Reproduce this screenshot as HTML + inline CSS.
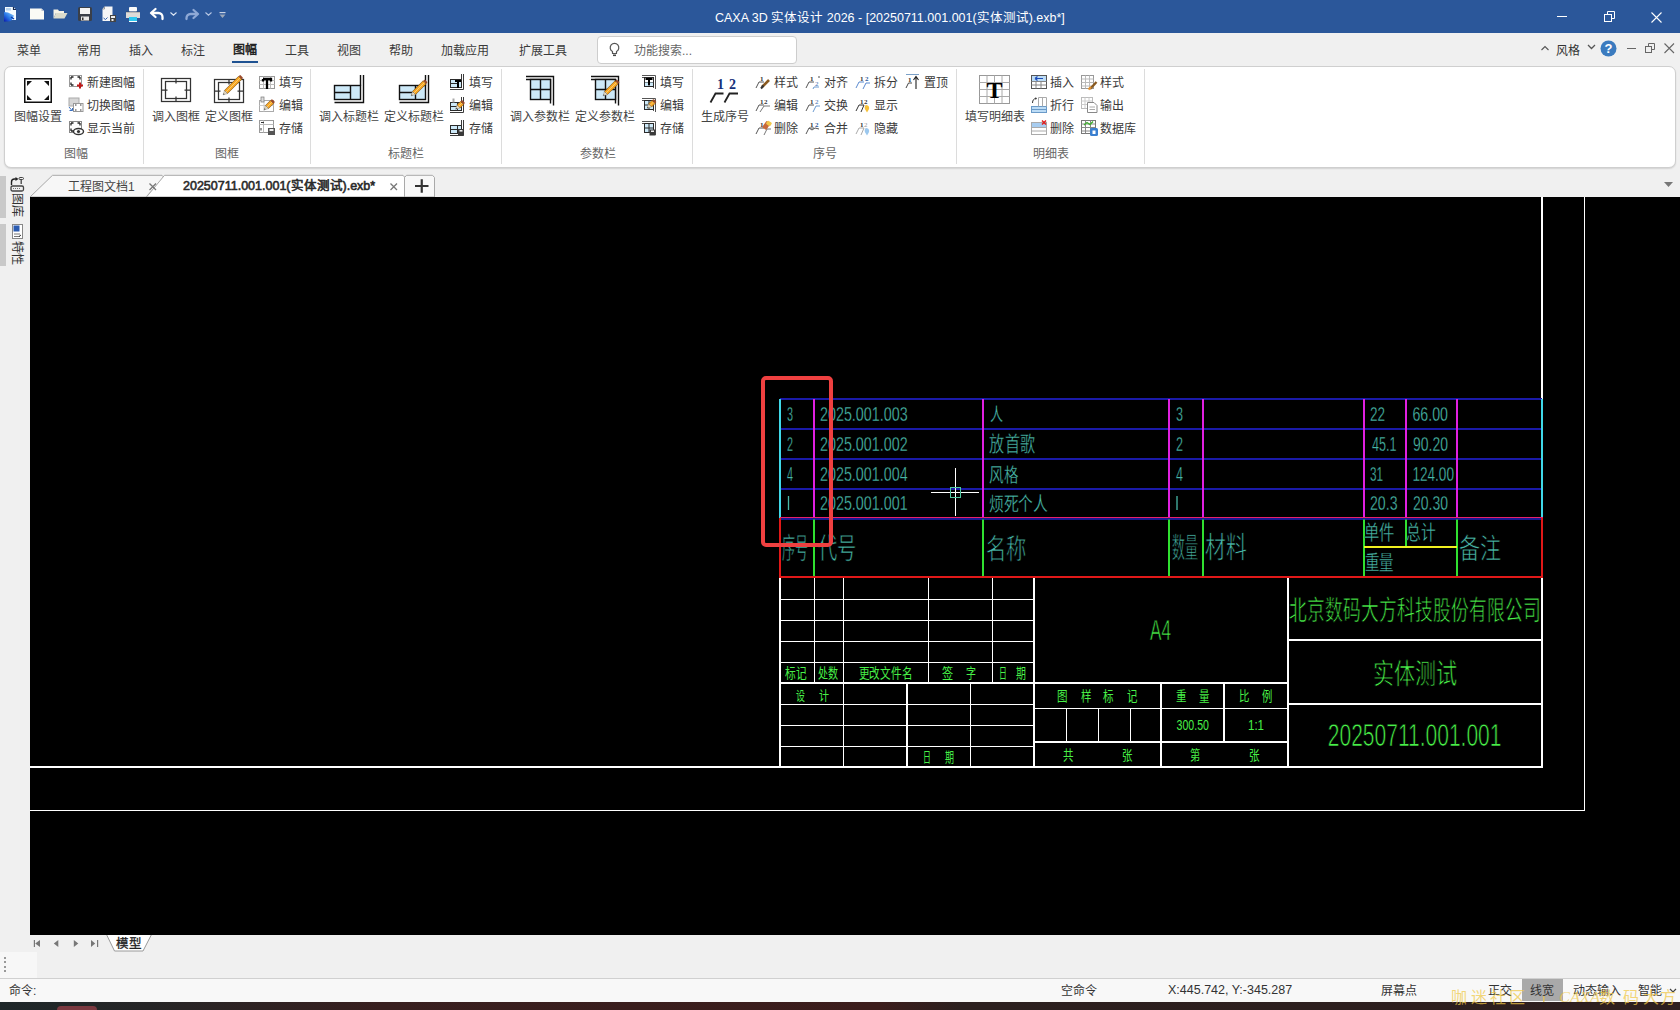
<!DOCTYPE html>
<html lang="zh-CN">
<head>
<meta charset="utf-8">
<style>
*{margin:0;padding:0;box-sizing:border-box}
html,body{width:1680px;height:1010px;overflow:hidden;background:#f0f0f0;font-family:"Liberation Sans",sans-serif;color:#333}
.a{position:absolute;white-space:nowrap}
svg.a{overflow:visible}
</style>
</head>
<body>
<div class="a" style="left:0px;top:0px;width:1680px;height:33px;background:#2b579a"></div>
<div class="a" style="left:715px;top:12px;font-size:12.5px;line-height:12.5px;color:#fff;">CAXA 3D 实体设计 2026 - [20250711.001.001(实体测试).exb*]</div>
<div class="a" style="left:1557px;top:16px;width:10px;height:1px;background:#fff"></div>
<svg class="a" style="left:1604px;top:11px" width="12" height="12" viewBox="0 0 12 12"><rect x="0.5" y="3.5" width="7" height="7" fill="none" stroke="#fff"/><path d="M3.5 3.5V0.5H10.5V7.5H7.5" fill="none" stroke="#fff"/></svg>
<svg class="a" style="left:1651px;top:12px" width="11" height="11" viewBox="0 0 11 11"><path d="M0.5 0.5L10.5 10.5M10.5 0.5L0.5 10.5" stroke="#fff" stroke-width="1.1"/></svg>
<div class="a" style="left:0px;top:33px;width:1680px;height:34px;background:#f0f0f0"></div>
<div class="a" style="left:17px;top:45px;font-size:12px;line-height:12px;color:#3a3a3a;">菜单</div>
<div class="a" style="left:77px;top:45px;font-size:12px;line-height:12px;color:#3a3a3a;">常用</div>
<div class="a" style="left:129px;top:45px;font-size:12px;line-height:12px;color:#3a3a3a;">插入</div>
<div class="a" style="left:181px;top:45px;font-size:12px;line-height:12px;color:#3a3a3a;">标注</div>
<div class="a" style="left:285px;top:45px;font-size:12px;line-height:12px;color:#3a3a3a;">工具</div>
<div class="a" style="left:337px;top:45px;font-size:12px;line-height:12px;color:#3a3a3a;">视图</div>
<div class="a" style="left:389px;top:45px;font-size:12px;line-height:12px;color:#3a3a3a;">帮助</div>
<div class="a" style="left:441px;top:45px;font-size:12px;line-height:12px;color:#3a3a3a;">加载应用</div>
<div class="a" style="left:519px;top:45px;font-size:12px;line-height:12px;color:#3a3a3a;">扩展工具</div>
<div class="a" style="left:233px;top:44px;font-size:12px;line-height:12px;color:#1a1a1a;-webkit-text-stroke:0.45px #1a1a1a">图幅</div>
<div class="a" style="left:232px;top:61px;width:26px;height:2px;background:#1f5292"></div>
<div class="a" style="left:597px;top:36px;width:200px;height:28px;background:#fff;border:1px solid #cdcdcd;border-radius:4px"></div>
<svg class="a" style="left:609px;top:43px" width="12" height="14" viewBox="0 0 12 14"><path d="M3.5 10.5V8.5A4.3 4.3 0 1 1 7.5 8.5V10.5Z" fill="none" stroke="#555" stroke-width="1.2" stroke-linejoin="round"/><path d="M4 12.3h3" stroke="#444" stroke-width="1.6"/></svg>
<div class="a" style="left:634px;top:45px;font-size:12px;line-height:12px;color:#666;">功能搜索...</div>
<svg class="a" style="left:1541px;top:45px" width="8" height="6" viewBox="0 0 8 6"><path d="M0.5 5L4 1.5L7.5 5" fill="none" stroke="#555" stroke-width="1.1"/></svg>
<div class="a" style="left:1556px;top:45px;font-size:12px;line-height:12px;color:#333;">风格</div>
<svg class="a" style="left:1587px;top:44px" width="9" height="6" viewBox="0 0 9 6"><path d="M1 1L4.5 4.5L8 1" fill="none" stroke="#555" stroke-width="1.3"/></svg>
<svg class="a" style="left:1600px;top:40px" width="17" height="17" viewBox="0 0 17 17"><circle cx="8.5" cy="8.5" r="8" fill="#3b7bbf"/><text x="8.5" y="13.2" text-anchor="middle" font-size="13" font-weight="bold" fill="#fff" font-family="Liberation Sans">?</text></svg>
<div class="a" style="left:1627px;top:48px;width:9px;height:1px;background:#666"></div>
<svg class="a" style="left:1645px;top:43px" width="11" height="11" viewBox="0 0 11 11"><rect x="0.5" y="3.5" width="6" height="6" fill="none" stroke="#666"/><path d="M3.5 3.5V0.5H9.5V6.5H6.5" fill="none" stroke="#666"/></svg>
<svg class="a" style="left:1664px;top:43px" width="11" height="11" viewBox="0 0 11 11"><path d="M0.5 0.5L10 10M10 0.5L0.5 10" stroke="#666" stroke-width="1.1"/></svg>
<div class="a" style="left:4px;top:66px;width:1672px;height:102px;background:#fff;border:1px solid #cfcfcf;border-radius:7px;box-shadow:0 1px 1.5px rgba(0,0,0,.12)"></div>
<div class="a" style="left:143px;top:69px;width:1px;height:95px;background:#dcdcdc"></div>
<div class="a" style="left:310px;top:69px;width:1px;height:95px;background:#dcdcdc"></div>
<div class="a" style="left:501px;top:69px;width:1px;height:95px;background:#dcdcdc"></div>
<div class="a" style="left:692px;top:69px;width:1px;height:95px;background:#dcdcdc"></div>
<div class="a" style="left:956px;top:69px;width:1px;height:95px;background:#dcdcdc"></div>
<div class="a" style="left:1144px;top:69px;width:1px;height:95px;background:#dcdcdc"></div>
<div class="a" style="left:64px;top:148px;font-size:12px;line-height:12px;color:#666;">图幅</div>
<div class="a" style="left:215px;top:148px;font-size:12px;line-height:12px;color:#666;">图框</div>
<div class="a" style="left:388px;top:148px;font-size:12px;line-height:12px;color:#666;">标题栏</div>
<div class="a" style="left:580px;top:148px;font-size:12px;line-height:12px;color:#666;">参数栏</div>
<div class="a" style="left:813px;top:148px;font-size:12px;line-height:12px;color:#666;">序号</div>
<div class="a" style="left:1033px;top:148px;font-size:12px;line-height:12px;color:#666;">明细表</div>
<div class="a" style="left:14px;top:111px;font-size:12px;line-height:12px;color:#444;">图幅设置</div>
<div class="a" style="left:152px;top:111px;font-size:12px;line-height:12px;color:#444;">调入图框</div>
<div class="a" style="left:205px;top:111px;font-size:12px;line-height:12px;color:#444;">定义图框</div>
<div class="a" style="left:319px;top:111px;font-size:12px;line-height:12px;color:#444;">调入标题栏</div>
<div class="a" style="left:384px;top:111px;font-size:12px;line-height:12px;color:#444;">定义标题栏</div>
<div class="a" style="left:510px;top:111px;font-size:12px;line-height:12px;color:#444;">调入参数栏</div>
<div class="a" style="left:575px;top:111px;font-size:12px;line-height:12px;color:#444;">定义参数栏</div>
<div class="a" style="left:701px;top:111px;font-size:12px;line-height:12px;color:#444;">生成序号</div>
<div class="a" style="left:965px;top:111px;font-size:12px;line-height:12px;color:#444;">填写明细表</div>
<div class="a" style="left:87px;top:77px;font-size:12px;line-height:12px;color:#3a3a3a;">新建图幅</div>
<div class="a" style="left:87px;top:100px;font-size:12px;line-height:12px;color:#3a3a3a;">切换图幅</div>
<div class="a" style="left:87px;top:123px;font-size:12px;line-height:12px;color:#3a3a3a;">显示当前</div>
<div class="a" style="left:279px;top:77px;font-size:12px;line-height:12px;color:#3a3a3a;">填写</div>
<div class="a" style="left:279px;top:100px;font-size:12px;line-height:12px;color:#3a3a3a;">编辑</div>
<div class="a" style="left:279px;top:123px;font-size:12px;line-height:12px;color:#3a3a3a;">存储</div>
<div class="a" style="left:469px;top:77px;font-size:12px;line-height:12px;color:#3a3a3a;">填写</div>
<div class="a" style="left:469px;top:100px;font-size:12px;line-height:12px;color:#3a3a3a;">编辑</div>
<div class="a" style="left:469px;top:123px;font-size:12px;line-height:12px;color:#3a3a3a;">存储</div>
<div class="a" style="left:660px;top:77px;font-size:12px;line-height:12px;color:#3a3a3a;">填写</div>
<div class="a" style="left:660px;top:100px;font-size:12px;line-height:12px;color:#3a3a3a;">编辑</div>
<div class="a" style="left:660px;top:123px;font-size:12px;line-height:12px;color:#3a3a3a;">存储</div>
<div class="a" style="left:774px;top:77px;font-size:12px;line-height:12px;color:#3a3a3a;">样式</div>
<div class="a" style="left:774px;top:100px;font-size:12px;line-height:12px;color:#3a3a3a;">编辑</div>
<div class="a" style="left:774px;top:123px;font-size:12px;line-height:12px;color:#3a3a3a;">删除</div>
<div class="a" style="left:824px;top:77px;font-size:12px;line-height:12px;color:#3a3a3a;">对齐</div>
<div class="a" style="left:824px;top:100px;font-size:12px;line-height:12px;color:#3a3a3a;">交换</div>
<div class="a" style="left:824px;top:123px;font-size:12px;line-height:12px;color:#3a3a3a;">合并</div>
<div class="a" style="left:874px;top:77px;font-size:12px;line-height:12px;color:#3a3a3a;">拆分</div>
<div class="a" style="left:874px;top:100px;font-size:12px;line-height:12px;color:#3a3a3a;">显示</div>
<div class="a" style="left:874px;top:123px;font-size:12px;line-height:12px;color:#3a3a3a;">隐藏</div>
<div class="a" style="left:924px;top:77px;font-size:12px;line-height:12px;color:#3a3a3a;">置顶</div>
<div class="a" style="left:1050px;top:77px;font-size:12px;line-height:12px;color:#3a3a3a;">插入</div>
<div class="a" style="left:1050px;top:100px;font-size:12px;line-height:12px;color:#3a3a3a;">折行</div>
<div class="a" style="left:1050px;top:123px;font-size:12px;line-height:12px;color:#3a3a3a;">删除</div>
<div class="a" style="left:1100px;top:77px;font-size:12px;line-height:12px;color:#3a3a3a;">样式</div>
<div class="a" style="left:1100px;top:100px;font-size:12px;line-height:12px;color:#3a3a3a;">输出</div>
<div class="a" style="left:1100px;top:123px;font-size:12px;line-height:12px;color:#3a3a3a;">数据库</div>
<div class="a" style="left:0px;top:935px;width:1680px;height:43px;background:#f0f0f0"></div>
<div class="a" style="left:0px;top:952px;width:37px;height:26px;background:#f7f7f7"></div>
<div class="a" style="left:0px;top:978px;width:1680px;height:1px;background:#d0d0d0"></div>
<div class="a" style="left:0px;top:979px;width:1680px;height:23px;background:#f8f8f8"></div>
<div class="a" style="left:9px;top:985px;font-size:12px;line-height:12px;color:#333;">命令:</div>
<div class="a" style="left:1061px;top:985px;font-size:12px;line-height:12px;color:#333;">空命令</div>
<div class="a" style="left:1168px;top:984px;font-size:12.5px;line-height:13px;color:#333">X:445.742, Y:-345.287</div>
<div class="a" style="left:1381px;top:985px;font-size:12px;line-height:12px;color:#333;">屏幕点</div>
<div class="a" style="left:1488px;top:985px;font-size:12px;line-height:12px;color:#333;">正交</div>
<div class="a" style="left:1522px;top:979px;width:41px;height:22px;background:#a9a9a9"></div>
<div class="a" style="left:1530px;top:985px;font-size:12px;line-height:12px;color:#333;">线宽</div>
<div class="a" style="left:1573px;top:985px;font-size:12px;line-height:12px;color:#333;">动态输入</div>
<div class="a" style="left:1638px;top:985px;font-size:12px;line-height:12px;color:#333;">智能</div>
<svg class="a" style="left:1669px;top:988px" width="8" height="6" viewBox="0 0 8 6"><path d="M1 1L4 4L7 1" fill="none" stroke="#444" stroke-width="1.2"/></svg>
<div class="a" style="left:0px;top:1002px;width:1680px;height:8px;background:linear-gradient(90deg,#1e2729 0px,#262526 150px,#381f1f 380px,#3c1d1c 880px,#2c201f 960px,#2e1f1f 1680px)"></div>
<div class="a" style="left:57px;top:1006px;width:40px;height:4px;background:#7b3940;border-radius:4px 4px 0 0"></div>
<svg class="a" style="left:3px;top:6px" width="15" height="16" viewBox="0 0 15 16"><defs><linearGradient id="ag" x1="1" y1="0" x2="0" y2="1"><stop offset="0" stop-color="#8fd0ff"/><stop offset="0.55" stop-color="#2a7ae8"/><stop offset="1" stop-color="#0818b0"/></linearGradient></defs><path d="M2 1H10.5L13 3.5V14H2Z" fill="#f4fbff"/><path d="M10.5 1V3.5H13" fill="none" stroke="#1a2a50" stroke-width="1.2"/><rect x="3" y="2" width="5" height="2.5" fill="#b8d4f0"/><path d="M1 6L5 6.5L11 9.5L9 14L6 15.5H1Z" fill="url(#ag)"/><path d="M8 11L11 13" stroke="#0a40b0" stroke-width="1.5"/></svg>
<svg class="a" style="left:30px;top:8px" width="15" height="12" viewBox="0 0 15 12"><path d="M0 0.5H11.5L14 3V11.5H0Z" fill="#fbfbf5"/><path d="M11.5 0.5V3H14Z" fill="#b8c0d0"/></svg>
<svg class="a" style="left:53px;top:9px" width="15" height="10" viewBox="0 0 15 10"><path d="M0.5 0.5H5L6 2H11V4H3L0.5 9.5Z" fill="#f4f2e6"/><path d="M3 4H14.5L11.5 9.5H0.5Z" fill="#dcdccc"/></svg>
<svg class="a" style="left:78px;top:7px" width="14" height="14" viewBox="0 0 14 14"><rect x="0" y="0" width="14" height="14" rx="1.5" fill="#3a3f48"/><rect x="2" y="1" width="10" height="6" fill="#f4f4f4"/><rect x="3" y="9.5" width="8" height="4" fill="#e8e8e8"/><rect x="4" y="10.5" width="1.5" height="2.5" fill="#333"/></svg>
<svg class="a" style="left:102px;top:6px" width="14" height="16" viewBox="0 0 14 16"><path d="M2.5 0.5H10.5V11H8V15H0.5V3Z" fill="#f6f6f6"/><path d="M2.5 0.5V3H0.5" fill="none" stroke="#777" stroke-width="0.7"/><path d="M1.5 12L3.5 13.5L5.5 11.5" stroke="#3060b0" fill="none"/><rect x="8" y="9" width="6" height="7" fill="#444"/><rect x="9" y="10" width="4" height="2" fill="#eee"/><rect x="9.5" y="13" width="2" height="2" fill="#eee"/></svg>
<svg class="a" style="left:125px;top:7px" width="16" height="15" viewBox="0 0 16 15"><rect x="4" y="0" width="8" height="4.5" rx="1" fill="#fafafa"/><path d="M1 5H15V11H1Z" fill="#dddbd8"/><rect x="1" y="4.5" width="14" height="1" fill="#333" opacity=".4"/><rect x="4" y="10" width="8" height="4" fill="#2ec8f0"/><rect x="4" y="14" width="8" height="1" fill="#fff"/></svg>
<svg class="a" style="left:150px;top:8px" width="14" height="12" viewBox="0 0 14 12"><path d="M5.5 1L1 5L5.5 9" fill="none" stroke="#fff" stroke-width="2.3" stroke-linejoin="round" stroke-linecap="round"/><path d="M2 5H8.5A4 4 0 0 1 12.5 9V11" fill="none" stroke="#fff" stroke-width="2.3" stroke-linecap="round"/></svg>
<svg class="a" style="left:170px;top:12px" width="7" height="4" viewBox="0 0 7 4"><path d="M0.5 0.5L3.5 3.2L6.5 0.5" fill="none" stroke="#dfe8f5" stroke-width="1.1"/></svg>
<svg class="a" style="left:185px;top:9px" width="14" height="11" viewBox="0 0 14 11"><path d="M8.5 1L13 5L8.5 9" fill="none" stroke="#8fa9d6" stroke-width="2.3" stroke-linejoin="round" stroke-linecap="round"/><path d="M12 5H5.5A4 4 0 0 0 1.5 9V10" fill="none" stroke="#8fa9d6" stroke-width="2.3" stroke-linecap="round"/></svg>
<svg class="a" style="left:205px;top:12px" width="7" height="4" viewBox="0 0 7 4"><path d="M0.5 0.5L3.5 3.2L6.5 0.5" fill="none" stroke="#b9c8e4" stroke-width="1.1"/></svg>
<svg class="a" style="left:219px;top:12px" width="7" height="7" viewBox="0 0 7 7"><rect x="0.5" y="0" width="6" height="1.2" fill="#c8d2e4"/><path d="M0.5 2.5H6.5L3.5 6Z" fill="#9aa6b8"/></svg>
<svg class="a" style="left:24px;top:78px" width="28" height="25" viewBox="0 0 28 25"><rect x="0.75" y="0.75" width="26.5" height="23.5" fill="#fff" stroke="#111" stroke-width="1.5"/><path d="M3 3H8L3 8Z M25 3H20L25 8Z M3 22H8L3 17Z M25 22H20L25 17Z" fill="#111"/></svg>
<svg class="a" style="left:68px;top:74px" width="16" height="15" viewBox="0 0 16 15"><rect x="1.5" y="1.5" width="12" height="11" fill="#fff" stroke="#999" stroke-width="1"/><path d="M3 3H5.5M3 3V5.5M12 3H9.5M12 3V5.5M3 11V8.5M3 11H5.5" stroke="#222" stroke-width="1.3" fill="none"/><path d="M12 8.5V14.5M9 11.5H15" stroke="#c01818" stroke-width="2"/></svg>
<svg class="a" style="left:68px;top:97px" width="16" height="16" viewBox="0 0 16 16"><rect x="1" y="1" width="10" height="8" fill="#d6d6d6" stroke="#aaa"/><rect x="5.5" y="6.5" width="9.5" height="8" fill="#fff" stroke="#999"/><path d="M7 8H8.5M13.5 8H12M7 13H8.5M13.5 13H12" stroke="#333"/><path d="M1 10L4 13.5M1.5 13.5H4.5V11" stroke="#3a70c0" fill="none"/></svg>
<svg class="a" style="left:68px;top:120px" width="17" height="16" viewBox="0 0 17 16"><rect x="1.5" y="1.5" width="12" height="11" fill="#fff" stroke="#888"/><path d="M3 3H5.5M3 3V5.5M12 3H9.5M12 3V5.5M3 11V8.5M3 11H5.5" stroke="#222" stroke-width="1.3" fill="none"/><ellipse cx="10.5" cy="11.5" rx="5" ry="3" fill="#fff" stroke="#333" stroke-width="1.4"/><circle cx="10.5" cy="11.5" r="1.6" fill="#333"/></svg>
<svg class="a" style="left:161px;top:78px" width="31" height="25" viewBox="0 0 31 25"><g fill="none" stroke="#333" stroke-width="1.25"><rect x="0.5" y="0.5" width="29" height="23"/><rect x="4.5" y="3.5" width="21" height="17"/><path d="M15 0.5V5.5M15 23.5V18.5M0.5 12H6.5M29.5 12H23.5"/></g></svg>
<svg class="a" style="left:214px;top:74px" width="32" height="31" viewBox="0 0 32 31"><g transform="translate(0,5)"><g fill="none" stroke="#333" stroke-width="1.25"><rect x="0.5" y="0.5" width="29" height="23"/><rect x="4.5" y="3.5" width="21" height="17"/><path d="M15 0.5V5.5M15 23.5V18.5M0.5 12H6.5M29.5 12H23.5"/></g></g><g transform="translate(12,18) rotate(-45)"><path d="M0 -2.2H20V2.2H0Z" fill="#f5a623" stroke="#7a4a10" stroke-width="0.6"/><path d="M0 0H20" stroke="#ffd27a" stroke-width="0.8"/><rect x="20" y="-2.2" width="2.2" height="4.4" rx="1" fill="#9a4a2a"/><path d="M0 -2.2L-4 0L0 2.2Z" fill="#e9dcc0" stroke="#777" stroke-width="0.4"/><path d="M-4 0L-2.6 -0.7V0.7Z" fill="#333"/></g></svg>
<svg class="a" style="left:259px;top:76px" width="16" height="14" viewBox="0 0 16 14"><rect x="0.5" y="0.5" width="15" height="12" fill="#fff" stroke="#999"/><path d="M0.5 4.5H15.5M0.5 8.5H15.5M4.5 0.5V12.5M11.5 0.5V12.5" stroke="#bbb"/><path d="M4 3H12V5.5M4 3V5.5M8 3V13" stroke="#000" stroke-width="2.3" fill="none"/></svg>
<svg class="a" style="left:259px;top:96px" width="16" height="16" viewBox="0 0 16 16"><rect x="0.5" y="4.5" width="14" height="11" fill="#fff" stroke="#aaa"/><path d="M0.5 9.5H14.5M5 4.5V15.5" stroke="#ccc"/><rect x="2" y="1" width="3" height="5" fill="#ddd" stroke="#777" stroke-width="0.7"/><g transform="translate(8,11) rotate(-45)"><path d="M0 -2.2H7V2.2H0Z" fill="#f5a623" stroke="#7a4a10" stroke-width="0.6"/><path d="M0 0H7" stroke="#ffd27a" stroke-width="0.8"/><rect x="7" y="-2.2" width="2.2" height="4.4" rx="1" fill="#9a4a2a"/><path d="M0 -2.2L-4 0L0 2.2Z" fill="#e9dcc0" stroke="#777" stroke-width="0.4"/><path d="M-4 0L-2.6 -0.7V0.7Z" fill="#333"/></g></svg>
<svg class="a" style="left:259px;top:120px" width="16" height="15" viewBox="0 0 16 15"><rect x="0.5" y="0.5" width="14" height="12" fill="#fff" stroke="#999"/><path d="M0.5 4.5H14.5M4.5 0.5V12.5" stroke="#bbb"/><path d="M2 2.5H5M2 10.5V8" stroke="#333"/><rect x="9" y="8" width="7" height="7" fill="#555"/><rect x="10.5" y="9" width="4" height="2" fill="#eee"/></svg>
<svg class="a" style="left:333px;top:74px" width="32" height="30" viewBox="0 0 32 30"><g fill="none" stroke="#111" stroke-width="1.4"><rect x="1.5" y="11.5" width="26" height="14" fill="#cde9f8"/><path d="M1.5 18.5H17.5M17.5 11.5V25.5M27.5 1V11.5M30.5 1V28.5H1.5"/></g></svg>
<svg class="a" style="left:398px;top:74px" width="32" height="30" viewBox="0 0 32 30"><g fill="none" stroke="#111" stroke-width="1.4"><rect x="1.5" y="11.5" width="26" height="14" fill="#cde9f8"/><path d="M1.5 18.5H17.5M17.5 11.5V25.5M27.5 1V11.5M30.5 1V28.5H1.5"/></g><g transform="translate(16,19) rotate(-45)"><path d="M0 -2.2H15V2.2H0Z" fill="#f5a623" stroke="#7a4a10" stroke-width="0.6"/><path d="M0 0H15" stroke="#ffd27a" stroke-width="0.8"/><rect x="15" y="-2.2" width="2.2" height="4.4" rx="1" fill="#9a4a2a"/><path d="M0 -2.2L-4 0L0 2.2Z" fill="#e9dcc0" stroke="#777" stroke-width="0.4"/><path d="M-4 0L-2.6 -0.7V0.7Z" fill="#333"/></g></svg>
<svg class="a" style="left:450px;top:74px" width="16" height="16" viewBox="0 0 16 16"><rect x="0.5" y="5.5" width="11" height="8" fill="#cde9f8" stroke="#2a2a2a"/><path d="M0.5 9.5H7.5M7.5 5.5V13.5" stroke="#2a2a2a" fill="none"/><path d="M11.5 0V5.5M13.5 0V15.5H0" fill="none" stroke="#3a3a3a"/><path d="M5 7H11M8 7V14" stroke="#000" stroke-width="2"/></svg>
<svg class="a" style="left:450px;top:97px" width="16" height="16" viewBox="0 0 16 16"><rect x="0.5" y="5.5" width="11" height="8" fill="#cde9f8" stroke="#2a2a2a"/><path d="M0.5 9.5H7.5M7.5 5.5V13.5" stroke="#2a2a2a" fill="none"/><path d="M11.5 0V5.5M13.5 0V15.5H0" fill="none" stroke="#3a3a3a"/><rect x="2.5" y="1.5" width="2" height="4" fill="#aaa"/><g transform="translate(8.5,9.5) rotate(-45)"><path d="M0 -2.2H5V2.2H0Z" fill="#f5a623" stroke="#7a4a10" stroke-width="0.6"/><path d="M0 0H5" stroke="#ffd27a" stroke-width="0.8"/><rect x="5" y="-2.2" width="2.2" height="4.4" rx="1" fill="#9a4a2a"/><path d="M0 -2.2L-4 0L0 2.2Z" fill="#e9dcc0" stroke="#777" stroke-width="0.4"/><path d="M-4 0L-2.6 -0.7V0.7Z" fill="#333"/></g></svg>
<svg class="a" style="left:450px;top:120px" width="16" height="16" viewBox="0 0 16 16"><rect x="0.5" y="5.5" width="11" height="8" fill="#cde9f8" stroke="#2a2a2a"/><path d="M0.5 9.5H7.5M7.5 5.5V13.5" stroke="#2a2a2a" fill="none"/><path d="M11.5 0V5.5M13.5 0V15.5H0" fill="none" stroke="#3a3a3a"/><rect x="8" y="9" width="6" height="6.5" fill="#3a3a3a"/><rect x="9.5" y="10" width="3" height="1.6" fill="#eee"/></svg>
<svg class="a" style="left:526px;top:76px" width="30" height="31" viewBox="0 0 30 31"><g fill="none" stroke="#111" stroke-width="1.4"><path d="M0 0.5H27.5V29.5M0 3.5H24.5V27.5"/><rect x="4.5" y="3.5" width="20" height="20" fill="#cde9f8"/><path d="M14.5 3.5V23.5M4.5 13.5H24.5"/></g></svg>
<svg class="a" style="left:591px;top:76px" width="31" height="31" viewBox="0 0 31 31"><g fill="none" stroke="#111" stroke-width="1.4"><path d="M0 0.5H27.5V29.5M0 3.5H24.5V27.5"/><rect x="4.5" y="3.5" width="20" height="20" fill="#cde9f8"/><path d="M14.5 3.5V23.5M4.5 13.5H24.5"/></g><g transform="translate(15,17) rotate(-45)"><path d="M0 -2.2H15V2.2H0Z" fill="#f5a623" stroke="#7a4a10" stroke-width="0.6"/><path d="M0 0H15" stroke="#ffd27a" stroke-width="0.8"/><rect x="15" y="-2.2" width="2.2" height="4.4" rx="1" fill="#9a4a2a"/><path d="M0 -2.2L-4 0L0 2.2Z" fill="#e9dcc0" stroke="#777" stroke-width="0.4"/><path d="M-4 0L-2.6 -0.7V0.7Z" fill="#333"/></g></svg>
<svg class="a" style="left:642px;top:75px" width="16" height="16" viewBox="0 0 16 16"><path d="M0 0.5H13.5V14M0 2.5H11.5V13" fill="none" stroke="#555"/><rect x="2.5" y="2.5" width="9" height="9" fill="#cde9f8" stroke="#2a2a2a"/><path d="M7 2.5V11.5M2.5 7H11.5" stroke="#2a2a2a"/><rect x="3" y="3" width="8" height="4" fill="#fff"/><path d="M3.5 4H10.5M7 4V10" stroke="#000" stroke-width="2"/></svg>
<svg class="a" style="left:642px;top:98px" width="16" height="16" viewBox="0 0 16 16"><path d="M0 0.5H13.5V14M0 2.5H11.5V13" fill="none" stroke="#555"/><rect x="2.5" y="2.5" width="9" height="9" fill="#cde9f8" stroke="#2a2a2a"/><path d="M7 2.5V11.5M2.5 7H11.5" stroke="#2a2a2a"/><g transform="translate(8,7.5) rotate(-45)"><path d="M0 -2.2H5V2.2H0Z" fill="#f5a623" stroke="#7a4a10" stroke-width="0.6"/><path d="M0 0H5" stroke="#ffd27a" stroke-width="0.8"/><rect x="5" y="-2.2" width="2.2" height="4.4" rx="1" fill="#9a4a2a"/><path d="M0 -2.2L-4 0L0 2.2Z" fill="#e9dcc0" stroke="#777" stroke-width="0.4"/><path d="M-4 0L-2.6 -0.7V0.7Z" fill="#333"/></g></svg>
<svg class="a" style="left:642px;top:121px" width="16" height="16" viewBox="0 0 16 16"><path d="M0 0.5H13.5V14M0 2.5H11.5V13" fill="none" stroke="#555"/><rect x="2.5" y="2.5" width="9" height="9" fill="#cde9f8" stroke="#2a2a2a"/><path d="M7 2.5V11.5M2.5 7H11.5" stroke="#2a2a2a"/><rect x="7.5" y="8.5" width="6" height="6" fill="#3a3a3a"/><rect x="9" y="9.5" width="3" height="1.5" fill="#eee"/></svg>
<svg class="a" style="left:709px;top:78px" width="31" height="26" viewBox="0 0 31 26"><text x="8" y="11" font-family="Liberation Serif" font-weight="bold" font-size="14" fill="#15307a">1</text><text x="20" y="11" font-family="Liberation Serif" font-weight="bold" font-size="14" fill="#15307a">2</text><path d="M1.5 24.5L6.5 15.5H14.5M15.5 24.5L20.5 15.5H29" fill="none" stroke="#222" stroke-width="1.8"/></svg>
<svg class="a" style="left:755px;top:74px" width="17" height="16" viewBox="0 0 17 16"><path d="M1 14L4 8H9" fill="none" stroke="#555" stroke-width="1"/><text x="5" y="6.5" font-family="Liberation Serif" font-weight="bold" font-size="7" fill="#333">1</text><path d="M7 13L14 6" stroke="#8a5a20" stroke-width="2.6"/><path d="M6 14.5L8.5 11.5" stroke="#333" stroke-width="2"/></svg>
<svg class="a" style="left:755px;top:97px" width="17" height="16" viewBox="0 0 17 16"><path d="M1 14L4 8H9" fill="none" stroke="#555" stroke-width="1"/><text x="5" y="6.5" font-family="Liberation Serif" font-weight="bold" font-size="7" fill="#333">1</text><path d="M5 15L9 9H15" fill="none" stroke="#777" stroke-width="1"/><text x="9" y="7" font-family="Liberation Serif" font-weight="bold" font-size="7" fill="#333">2</text></svg>
<svg class="a" style="left:755px;top:120px" width="17" height="16" viewBox="0 0 17 16"><path d="M1 14L4 8H9" fill="none" stroke="#555" stroke-width="1"/><text x="5" y="6.5" font-family="Liberation Serif" font-weight="bold" font-size="7" fill="#333">1</text><path d="M9 15L12 9H16" fill="none" stroke="#777" stroke-width="1"/><rect x="9" y="1" width="5" height="8" rx="1" transform="rotate(35 11 5)" fill="#c8693a"/><rect x="10" y="0" width="5" height="4" rx="1" transform="rotate(35 11 5)" fill="#f2c84b"/></svg>
<svg class="a" style="left:805px;top:74px" width="17" height="16" viewBox="0 0 17 16"><path d="M1 14L4 8H9" fill="none" stroke="#555" stroke-width="1"/><text x="5" y="6.5" font-family="Liberation Serif" font-weight="bold" font-size="7" fill="#333">1</text><text x="10" y="12" font-family="Liberation Serif" font-size="7" fill="#3a70b0">2</text><path d="M8 15L9 13H14" stroke="#6a9ad0" fill="none"/><circle cx="14" cy="3" r="0.8" fill="#333"/></svg>
<svg class="a" style="left:805px;top:97px" width="17" height="16" viewBox="0 0 17 16"><path d="M1 14L4 8H9" fill="none" stroke="#555" stroke-width="1"/><text x="5" y="6.5" font-family="Liberation Serif" font-weight="bold" font-size="7" fill="#333">1</text><text x="10" y="6.5" font-family="Liberation Serif" font-size="7" fill="#3a70b0">2</text><path d="M8 15L11 9H15" stroke="#6a9ad0" fill="none"/></svg>
<svg class="a" style="left:805px;top:120px" width="17" height="16" viewBox="0 0 17 16"><path d="M1 14L4 8H9" fill="none" stroke="#555" stroke-width="1"/><text x="5" y="6.5" font-family="Liberation Serif" font-weight="bold" font-size="7" fill="#333">1</text><text x="10" y="6.5" font-family="Liberation Serif" font-weight="bold" font-size="7" fill="#2a5aa0">2</text><path d="M4 8L7 10L10 8L14 9" stroke="#555" fill="none"/></svg>
<svg class="a" style="left:855px;top:74px" width="17" height="16" viewBox="0 0 17 16"><path d="M1 14L4 8H9" fill="none" stroke="#5a8ad0" stroke-width="1"/><text x="5" y="6.5" font-family="Liberation Serif" font-weight="bold" font-size="7" fill="#333">1</text><text x="10" y="6.5" font-family="Liberation Serif" font-weight="bold" font-size="7" fill="#2a5aa0">2</text><path d="M8 15L11 9H15" stroke="#5a8ad0" fill="none"/></svg>
<svg class="a" style="left:855px;top:97px" width="17" height="16" viewBox="0 0 17 16"><path d="M1 14L4 8H9" fill="none" stroke="#333" stroke-width="1"/><text x="5" y="6.5" font-family="Liberation Serif" font-weight="bold" font-size="7" fill="#333">1</text><text x="9" y="6.5" font-family="Liberation Serif" font-weight="bold" font-size="7" fill="#333">2</text><path d="M6 15L9 8" stroke="#333"/><path d="M11 8C14 8 15 11 13.5 13L12 15.5L10.5 13C9 11 10 8 11 8Z" fill="#f6c13a"/></svg>
<svg class="a" style="left:855px;top:120px" width="17" height="16" viewBox="0 0 17 16"><path d="M1 14L4 8H9" fill="none" stroke="#aaa" stroke-width="1"/><text x="5" y="6.5" font-family="Liberation Serif" font-weight="bold" font-size="7" fill="#333">1</text><text x="9" y="6.5" font-family="Liberation Serif" font-size="7" fill="#999">2</text><path d="M6 15L9 8" stroke="#aaa"/><path d="M11 8C14 8 15 11 13.5 13L12 15.5L10.5 13C9 11 10 8 11 8Z" fill="#9cc8ee"/></svg>
<svg class="a" style="left:905px;top:74px" width="16" height="16" viewBox="0 0 16 16"><path d="M1 0.5H14" stroke="#7aa0c8" stroke-width="1"/><path d="M1 14L3.5 9H7" fill="none" stroke="#444"/><text x="3" y="8" font-family="Liberation Serif" font-weight="bold" font-size="7" fill="#333">1</text><path d="M11 15V3M8.5 6L11 2.5L13.5 6" fill="none" stroke="#222" stroke-width="1.1"/></svg>
<svg class="a" style="left:979px;top:75px" width="32" height="30" viewBox="0 0 32 30"><rect x="0.5" y="0.5" width="30" height="28" fill="#fff" stroke="#999"/><path d="M0.5 7.5H30.5M0.5 14.5H30.5M0.5 21.5H30.5M8 0.5V28.5M15.5 0.5V28.5M23 0.5V28.5" stroke="#aaa"/><text x="15.5" y="23" text-anchor="middle" font-family="Liberation Serif" font-weight="bold" font-size="24" fill="#000">T</text></svg>
<svg class="a" style="left:1031px;top:75px" width="16" height="14" viewBox="0 0 16 14"><rect x="0.5" y="0.5" width="15" height="13" fill="#fff" stroke="#555"/><rect x="1" y="1" width="14" height="5" fill="#bcdcf6"/><path d="M0.5 6.5H15.5M0.5 10H15.5M5 6.5V13.5M10 6.5V13.5" stroke="#888"/><path d="M4 3.5H12M4 3.5L6.5 1.5M4 3.5L6.5 5.5" stroke="#1a4ab8" stroke-width="1.2" fill="none"/></svg>
<svg class="a" style="left:1031px;top:97px" width="16" height="16" viewBox="0 0 16 16"><rect x="0.5" y="9.5" width="15" height="6" fill="#bcdcf6" stroke="#6a9ac8"/><path d="M0.5 12.5H15.5" stroke="#6a9ac8"/><path d="M7.5 0.5V9.5M11.5 0.5V9.5M7.5 0.5H15.5V9.5" stroke="#aaa" fill="none"/><path d="M1.5 6C1.5 3 3 1.5 5 1.5" stroke="#333" fill="none"/><path d="M4.5 0L6 1.5L4.5 3" fill="#333"/></svg>
<svg class="a" style="left:1031px;top:120px" width="16" height="15" viewBox="0 0 16 15"><rect x="0.5" y="2.5" width="15" height="12" fill="#fff" stroke="#aaa"/><rect x="1" y="3" width="14" height="4" fill="#a8cdf0"/><path d="M0.5 7.5H15.5M0.5 11H15.5" stroke="#aaa"/><path d="M11 0.5L15 4.5M15 0.5L11 4.5" stroke="#e02020" stroke-width="1.5"/></svg>
<svg class="a" style="left:1081px;top:75px" width="17" height="15" viewBox="0 0 17 15"><rect x="0.5" y="0.5" width="12" height="13" fill="#fff" stroke="#999"/><path d="M0.5 4H12.5M0.5 7.5H12.5M0.5 11H12.5M4.5 0.5V13.5M8.5 0.5V13.5" stroke="#bbb"/><path d="M9 14L15.5 7" stroke="#8a5a20" stroke-width="2.4"/><path d="M7.5 14.5L10 12" stroke="#e09030" stroke-width="2.2"/></svg>
<svg class="a" style="left:1081px;top:97px" width="17" height="16" viewBox="0 0 17 16"><rect x="0.5" y="0.5" width="11" height="11" fill="#fff" stroke="#bbb"/><path d="M0.5 4H11.5M0.5 7.5H11.5M4 0.5V11.5M8 0.5V11.5" stroke="#ccc"/><path d="M6.5 5.5H13L16 8.5V15.5H6.5Z" fill="#fff" stroke="#888"/><path d="M8.5 10H14M8.5 12.5H14" stroke="#aaa"/></svg>
<svg class="a" style="left:1081px;top:120px" width="17" height="16" viewBox="0 0 17 16"><rect x="0.5" y="0.5" width="14" height="13" fill="#fff" stroke="#777"/><path d="M0.5 4H14.5M0.5 7.5H14.5M0.5 11H14.5M4.5 0.5V13.5M9.5 0.5V13.5" stroke="#888"/><path d="M3 5L6 2.5L9 4.5L12 1.5" stroke="#40b030" stroke-width="1.4" fill="none"/><rect x="9" y="8" width="8" height="8" rx="1.5" fill="#3a7fd0"/><rect x="11.5" y="10.5" width="3" height="3.5" fill="#fff"/></svg>
<svg class="a" style="left:28px;top:173px" width="410" height="25" viewBox="0 0 410 25"><path d="M2 24L24.5 2.3H134L136 4.5L118 24Z" fill="#f7f7f7" stroke="#a9a9a9" stroke-width="1"/><path d="M118.5 24L136.5 2.3H375L376.5 4V24Z" fill="#ffffff" stroke="#a9a9a9" stroke-width="1"/><path d="M376.5 24V4.5L378.5 2.3H404.5L406.5 4.5V24Z" fill="#f8f8f8" stroke="#a9a9a9" stroke-width="1"/><path d="M387 13H400.5M393.75 6.2V19.8" stroke="#333" stroke-width="2.2"/><path d="M121.5 10.5L128 17M128 10.5L121.5 17" stroke="#777" stroke-width="1.3"/><path d="M362.5 10.5L369 17M369 10.5L362.5 17" stroke="#777" stroke-width="1.3"/></svg>
<div class="a" style="left:68px;top:181px;font-size:12px;line-height:12px;color:#444;">工程图文档1</div>
<div class="a" style="left:183px;top:180px;font-size:12.5px;line-height:13px;color:#2a2a2a;-webkit-text-stroke:0.6px #2a2a2a;letter-spacing:0px">20250711.001.001(实体测试).exb*</div>
<svg class="a" style="left:1664px;top:182px" width="10" height="6" viewBox="0 0 10 6"><path d="M0 0H9L4.5 5Z" fill="#777"/></svg>
<div class="a" style="left:0px;top:176px;width:6px;height:42px;background:#c9c9c9"></div>
<div class="a" style="left:0px;top:224px;width:6px;height:42px;background:#c9c9c9"></div>
<svg class="a" style="left:10px;top:177px" width="14" height="15" viewBox="0 0 14 15"><path d="M1.5 8V5A3 3 0 0 1 4.5 2H6" fill="none" stroke="#222" stroke-width="1.4"/><path d="M5.5 0L8.5 2L5.5 4Z" fill="#222"/><rect x="9" y="0.5" width="4.5" height="2" rx="1" fill="none" stroke="#444" stroke-width="1"/><path d="M11.2 2.5V7" stroke="#444" stroke-width="1.3"/><rect x="1" y="9" width="12.5" height="5" rx="1.5" fill="none" stroke="#444" stroke-width="1.3"/><path d="M3 11.5H10" stroke="#777" stroke-dasharray="1 1"/></svg>
<div class="a" style="left:4px;top:199px;width:26px;font-size:12px;line-height:12px;color:#333;transform:rotate(90deg);transform-origin:13px 6px;text-align:center">图库</div>
<svg class="a" style="left:12px;top:224px" width="11" height="15" viewBox="0 0 11 15"><rect x="0.5" y="0.5" width="10" height="14" fill="#fff" stroke="#888"/><rect x="1.5" y="1.5" width="6" height="6" fill="#2a5bb0"/><path d="M2 10H8M2 12.5H8" stroke="#777"/><path d="M7 12.5L9 11" stroke="#333"/></svg>
<div class="a" style="left:4px;top:247px;width:26px;font-size:12px;line-height:12px;color:#333;transform:rotate(90deg);transform-origin:13px 6px;text-align:center">特性</div>
<svg class="a" style="left:33px;top:939px" width="66" height="9" viewBox="0 0 66 9"><rect x="0.8" y="1" width="1.2" height="7" fill="#777"/><path d="M7 1V8L2.2 4.5Z" fill="#777"/><path d="M25.3 1V8L20.8 4.5Z" fill="#777"/><path d="M40.8 1V8L45.3 4.5Z" fill="#777"/><path d="M58 1V8L62.2 4.5Z" fill="#777"/><rect x="64" y="1" width="1.2" height="7" fill="#777"/></svg>
<svg class="a" style="left:105px;top:934px" width="48" height="19" viewBox="0 0 48 19"><path d="M1.5 0.5L9.5 17H38L46.5 0.5" fill="#fff" stroke="#9a9a9a" stroke-width="1"/></svg>
<div class="a" style="left:116px;top:938px;font-size:12.5px;line-height:12.5px;color:#222;-webkit-text-stroke:0.3px #222">模型</div>
<div class="a" style="left:4px;top:957.0px;width:2px;height:2px;background:#999"></div>
<div class="a" style="left:4px;top:961.3px;width:2px;height:2px;background:#999"></div>
<div class="a" style="left:4px;top:965.6px;width:2px;height:2px;background:#999"></div>
<div class="a" style="left:4px;top:969.9px;width:2px;height:2px;background:#999"></div>
<svg class="a" style="left:1440px;top:983px" width="240" height="27" viewBox="0 0 240 27"><g fill="rgba(240,200,70,0.72)" font-family="Liberation Serif,serif"><text x="10.5" y="20" font-size="16">咖</text><text x="30.5" y="20" font-size="16">迷</text><text x="49.5" y="20" font-size="16">社</text><text x="69" y="20" font-size="16">区</text><text x="159" y="20" font-size="16">数</text><text x="182.5" y="20" font-size="16">码</text><text x="203" y="20" font-size="16">大</text><text x="220" y="20" font-size="16">方</text><text x="119" y="19" font-size="15" font-style="italic" textLength="41" lengthAdjust="spacingAndGlyphs">CAXA</text><rect x="103" y="13" width="1.5" height="6" /></g></svg>
<div class="a" style="left:30px;top:197px;width:1650px;height:738px;background:#000;overflow:hidden">
<svg width="1650" height="738" viewBox="30 197 1650 738" style="position:absolute;left:0;top:0;font-family:'Liberation Sans',sans-serif">
<line x1="1584.5" y1="197" x2="1584.5" y2="810.5" stroke="#ffffff" stroke-width="1"/>
<line x1="30" y1="810.5" x2="1585" y2="810.5" stroke="#ffffff" stroke-width="1"/>
<line x1="1542" y1="197" x2="1542" y2="399" stroke="#ffffff" stroke-width="2"/>
<line x1="30" y1="767" x2="1543" y2="767" stroke="#ffffff" stroke-width="2"/>
<line x1="780" y1="399" x2="1542" y2="399" stroke="#1a1aa8" stroke-width="2"/>
<line x1="780" y1="429" x2="1542" y2="429" stroke="#1a1aa8" stroke-width="2"/>
<line x1="780" y1="459" x2="1542" y2="459" stroke="#1a1aa8" stroke-width="2"/>
<line x1="780" y1="489" x2="1542" y2="489" stroke="#1a1aa8" stroke-width="2"/>
<line x1="780" y1="399" x2="780" y2="518" stroke="#40d8e8" stroke-width="2"/>
<line x1="1542" y1="399" x2="1542" y2="518" stroke="#40d8e8" stroke-width="2"/>
<line x1="814" y1="399" x2="814" y2="518" stroke="#e020e0" stroke-width="2"/>
<line x1="983" y1="399" x2="983" y2="518" stroke="#e020e0" stroke-width="2"/>
<line x1="1169" y1="399" x2="1169" y2="518" stroke="#e020e0" stroke-width="2"/>
<line x1="1203" y1="399" x2="1203" y2="518" stroke="#e020e0" stroke-width="2"/>
<line x1="1364" y1="399" x2="1364" y2="518" stroke="#e020e0" stroke-width="2"/>
<line x1="1406" y1="399" x2="1406" y2="518" stroke="#e020e0" stroke-width="2"/>
<line x1="1457" y1="399" x2="1457" y2="518" stroke="#e020e0" stroke-width="2"/>
<line x1="780" y1="519" x2="1543" y2="519" stroke="#2020c0" stroke-width="1.4"/>
<line x1="780" y1="517.5" x2="1543" y2="517.5" stroke="#e8206a" stroke-width="1.2"/>
<line x1="780" y1="518" x2="780" y2="577" stroke="#e01818" stroke-width="2"/>
<line x1="1542" y1="518" x2="1542" y2="577" stroke="#e01818" stroke-width="2"/>
<line x1="779" y1="577" x2="1543" y2="577" stroke="#e01818" stroke-width="2"/>
<line x1="814" y1="519.5" x2="814" y2="576" stroke="#30e030" stroke-width="2"/>
<line x1="983" y1="519.5" x2="983" y2="576" stroke="#30e030" stroke-width="2"/>
<line x1="1169" y1="519.5" x2="1169" y2="576" stroke="#30e030" stroke-width="2"/>
<line x1="1203" y1="519.5" x2="1203" y2="576" stroke="#30e030" stroke-width="2"/>
<line x1="1364" y1="519.5" x2="1364" y2="576" stroke="#30e030" stroke-width="2"/>
<line x1="1457" y1="519.5" x2="1457" y2="576" stroke="#30e030" stroke-width="2"/>
<line x1="1406" y1="519.5" x2="1406" y2="547" stroke="#30e030" stroke-width="2"/>
<line x1="1364" y1="547" x2="1457" y2="547" stroke="#f0f020" stroke-width="2"/>
<line x1="780" y1="578" x2="780" y2="767" stroke="#ffffff" stroke-width="2"/>
<line x1="1034" y1="578" x2="1034" y2="767" stroke="#ffffff" stroke-width="2"/>
<line x1="1288" y1="578" x2="1288" y2="767" stroke="#ffffff" stroke-width="2"/>
<line x1="1542" y1="578" x2="1542" y2="767" stroke="#ffffff" stroke-width="2"/>
<line x1="780" y1="599.5" x2="1034" y2="599.5" stroke="#ffffff" stroke-width="1"/>
<line x1="780" y1="620.5" x2="1034" y2="620.5" stroke="#ffffff" stroke-width="1"/>
<line x1="780" y1="641.5" x2="1034" y2="641.5" stroke="#ffffff" stroke-width="1"/>
<line x1="780" y1="662.5" x2="1034" y2="662.5" stroke="#ffffff" stroke-width="1"/>
<line x1="780" y1="683" x2="1034" y2="683" stroke="#ffffff" stroke-width="2"/>
<line x1="780" y1="704.5" x2="1034" y2="704.5" stroke="#ffffff" stroke-width="1"/>
<line x1="780" y1="725.5" x2="1034" y2="725.5" stroke="#ffffff" stroke-width="1"/>
<line x1="780" y1="746.5" x2="1034" y2="746.5" stroke="#ffffff" stroke-width="1"/>
<line x1="814.5" y1="578" x2="814.5" y2="683" stroke="#ffffff" stroke-width="1"/>
<line x1="843.5" y1="578" x2="843.5" y2="683" stroke="#ffffff" stroke-width="1"/>
<line x1="928.5" y1="578" x2="928.5" y2="683" stroke="#ffffff" stroke-width="1"/>
<line x1="992.5" y1="578" x2="992.5" y2="683" stroke="#ffffff" stroke-width="1"/>
<line x1="843.5" y1="683" x2="843.5" y2="767" stroke="#ffffff" stroke-width="1"/>
<line x1="907" y1="683" x2="907" y2="767" stroke="#ffffff" stroke-width="2"/>
<line x1="970.5" y1="683" x2="970.5" y2="767" stroke="#ffffff" stroke-width="1"/>
<line x1="1034" y1="683" x2="1288" y2="683" stroke="#ffffff" stroke-width="2"/>
<line x1="1034" y1="708.5" x2="1288" y2="708.5" stroke="#ffffff" stroke-width="1"/>
<line x1="1034" y1="742" x2="1288" y2="742" stroke="#ffffff" stroke-width="2"/>
<line x1="1161" y1="683" x2="1161" y2="767" stroke="#ffffff" stroke-width="2"/>
<line x1="1224" y1="683" x2="1224" y2="742" stroke="#ffffff" stroke-width="2"/>
<line x1="1066.5" y1="708" x2="1066.5" y2="742" stroke="#ffffff" stroke-width="1"/>
<line x1="1098.5" y1="708" x2="1098.5" y2="742" stroke="#ffffff" stroke-width="1"/>
<line x1="1130.5" y1="708" x2="1130.5" y2="742" stroke="#ffffff" stroke-width="1"/>
<line x1="1288" y1="640" x2="1542" y2="640" stroke="#ffffff" stroke-width="2"/>
<line x1="1288" y1="704" x2="1542" y2="704" stroke="#ffffff" stroke-width="2"/>
<line x1="931" y1="492.5" x2="979" y2="492.5" stroke="#fff" stroke-width="1"/>
<line x1="955.5" y1="468" x2="955.5" y2="516" stroke="#fff" stroke-width="1"/>
<rect x="950.5" y="487.5" width="10" height="10" fill="none" stroke="#50c8a0" stroke-width="1"/>
<g stroke="#000"><text x="787.00" y="421.0" fill="#48b8a8" font-size="20.00" stroke-width="0.30" textLength="6.01" lengthAdjust="spacingAndGlyphs">3</text>
<text x="820.00" y="421.0" fill="#48b8a8" font-size="20.00" stroke-width="0.30" textLength="87.63" lengthAdjust="spacingAndGlyphs">2025.001.003</text>
<text x="1176.00" y="421.0" fill="#48b8a8" font-size="20.00" stroke-width="0.30" textLength="7.01" lengthAdjust="spacingAndGlyphs">3</text>
<text x="1370.00" y="421.0" fill="#48b8a8" font-size="20.00" stroke-width="0.30" textLength="15.03" lengthAdjust="spacingAndGlyphs">22</text>
<text x="1412.40" y="421.0" fill="#48b8a8" font-size="20.00" stroke-width="0.30" textLength="35.56" lengthAdjust="spacingAndGlyphs">66.00</text>
<text x="787.00" y="451.0" fill="#48b8a8" font-size="20.00" stroke-width="0.30" textLength="6.01" lengthAdjust="spacingAndGlyphs">2</text>
<text x="820.00" y="451.0" fill="#48b8a8" font-size="20.00" stroke-width="0.30" textLength="87.63" lengthAdjust="spacingAndGlyphs">2025.001.002</text>
<text x="1176.00" y="451.0" fill="#48b8a8" font-size="20.00" stroke-width="0.30" textLength="7.01" lengthAdjust="spacingAndGlyphs">2</text>
<text x="1372.00" y="451.0" fill="#48b8a8" font-size="20.00" stroke-width="0.30" textLength="24.52" lengthAdjust="spacingAndGlyphs">45.1</text>
<text x="1413.00" y="451.0" fill="#48b8a8" font-size="20.00" stroke-width="0.30" textLength="34.97" lengthAdjust="spacingAndGlyphs">90.20</text>
<text x="787.00" y="481.0" fill="#48b8a8" font-size="20.00" stroke-width="0.30" textLength="6.01" lengthAdjust="spacingAndGlyphs">4</text>
<text x="820.00" y="481.0" fill="#48b8a8" font-size="20.00" stroke-width="0.30" textLength="87.63" lengthAdjust="spacingAndGlyphs">2025.001.004</text>
<text x="1176.00" y="481.0" fill="#48b8a8" font-size="20.00" stroke-width="0.30" textLength="7.01" lengthAdjust="spacingAndGlyphs">4</text>
<text x="1370.00" y="481.0" fill="#48b8a8" font-size="20.00" stroke-width="0.30" textLength="13.03" lengthAdjust="spacingAndGlyphs">31</text>
<text x="1412.40" y="481.0" fill="#48b8a8" font-size="20.00" stroke-width="0.30" textLength="41.58" lengthAdjust="spacingAndGlyphs">124.00</text>
<line x1="788.5" y1="496" x2="788.5" y2="510" stroke="#48b8a8" stroke-width="1.3"/>
<text x="820.00" y="510.0" fill="#48b8a8" font-size="20.00" stroke-width="0.30" textLength="87.63" lengthAdjust="spacingAndGlyphs">2025.001.001</text>
<line x1="1177" y1="496" x2="1177" y2="510" stroke="#48b8a8" stroke-width="1.3"/>
<text x="1370.00" y="510.0" fill="#48b8a8" font-size="20.00" stroke-width="0.30" textLength="27.52" lengthAdjust="spacingAndGlyphs">20.3</text>
<text x="1413.00" y="510.0" fill="#48b8a8" font-size="20.00" stroke-width="0.30" textLength="34.97" lengthAdjust="spacingAndGlyphs">20.30</text>
<text x="990.2" y="421.2" fill="#48b8a8" font-size="18.2" stroke-width="0.19" textLength="12.9" lengthAdjust="spacingAndGlyphs">人</text>
<text x="989.4" y="451.3" fill="#48b8a8" font-size="20.9" stroke-width="0.35" textLength="45.5" lengthAdjust="spacingAndGlyphs">放首歌</text>
<text x="989.4" y="481.5" fill="#48b8a8" font-size="19.4" stroke-width="0.26" textLength="28.5" lengthAdjust="spacingAndGlyphs">风格</text>
<text x="989.4" y="510.5" fill="#48b8a8" font-size="19.4" stroke-width="0.26" textLength="58.2" lengthAdjust="spacingAndGlyphs">烦死个人</text>
<text x="781.5" y="558.7" fill="#48b8a8" font-size="29.0" stroke-width="0.75" textLength="26.0" lengthAdjust="spacingAndGlyphs">序号</text>
<text x="818.2" y="558.7" fill="#48b8a8" font-size="29.0" stroke-width="0.75" textLength="38.5" lengthAdjust="spacingAndGlyphs">代号</text>
<text x="986.2" y="558.5" fill="#48b8a8" font-size="28.1" stroke-width="0.75" textLength="40.6" lengthAdjust="spacingAndGlyphs">名称</text>
<text x="1171.5" y="558.4" fill="#48b8a8" font-size="28.7" stroke-width="0.75" textLength="26.0" lengthAdjust="spacingAndGlyphs">数量</text>
<text x="1205.2" y="557.7" fill="#48b8a8" font-size="29.0" stroke-width="0.75" textLength="41.7" lengthAdjust="spacingAndGlyphs">材料</text>
<text x="1364.4" y="539.9" fill="#48b8a8" font-size="20.2" stroke-width="0.31" textLength="30.2" lengthAdjust="spacingAndGlyphs">单件</text>
<text x="1406.4" y="539.9" fill="#48b8a8" font-size="20.2" stroke-width="0.31" textLength="29.2" lengthAdjust="spacingAndGlyphs">总计</text>
<text x="1364.9" y="569.7" fill="#48b8a8" font-size="20.3" stroke-width="0.32" textLength="28.6" lengthAdjust="spacingAndGlyphs">重量</text>
<text x="1459.1" y="558.5" fill="#48b8a8" font-size="28.6" stroke-width="0.75" textLength="42.7" lengthAdjust="spacingAndGlyphs">备注</text>
<text x="785.0" y="677.9" fill="#48f048" font-size="13.8" stroke-width="0.00" textLength="21.7" lengthAdjust="spacingAndGlyphs">标记</text>
<text x="818.3" y="677.9" fill="#48f048" font-size="13.8" stroke-width="0.00" textLength="20.4" lengthAdjust="spacingAndGlyphs">处数</text>
<text x="858.6" y="677.9" fill="#48f048" font-size="13.8" stroke-width="0.00" textLength="53.9" lengthAdjust="spacingAndGlyphs">更改文件名</text>
<text x="942.1" y="677.9" fill="#48f048" font-size="13.8" stroke-width="0.00" textLength="11.3" lengthAdjust="spacingAndGlyphs">签</text>
<text x="966.1" y="677.9" fill="#48f048" font-size="13.8" stroke-width="0.00" textLength="10.1" lengthAdjust="spacingAndGlyphs">字</text>
<text x="999.4" y="677.9" fill="#48f048" font-size="13.8" stroke-width="0.00" textLength="7.9" lengthAdjust="spacingAndGlyphs">日</text>
<text x="1016.0" y="677.9" fill="#48f048" font-size="13.8" stroke-width="0.00" textLength="10.1" lengthAdjust="spacingAndGlyphs">期</text>
<text x="795.6" y="699.5" fill="#48f048" font-size="12.9" stroke-width="0.00" textLength="9.0" lengthAdjust="spacingAndGlyphs">设</text>
<text x="818.5" y="699.5" fill="#48f048" font-size="12.9" stroke-width="0.00" textLength="10.1" lengthAdjust="spacingAndGlyphs">计</text>
<text x="922.5" y="761.9" fill="#48f048" font-size="14.0" stroke-width="0.00" textLength="7.8" lengthAdjust="spacingAndGlyphs">日</text>
<text x="945.3" y="761.9" fill="#48f048" font-size="14.0" stroke-width="0.00" textLength="9.0" lengthAdjust="spacingAndGlyphs">期</text>
<text x="1056.6" y="700.9" fill="#48f048" font-size="13.4" stroke-width="0.00" textLength="10.2" lengthAdjust="spacingAndGlyphs">图</text>
<text x="1080.6" y="700.9" fill="#48f048" font-size="13.4" stroke-width="0.00" textLength="10.1" lengthAdjust="spacingAndGlyphs">样</text>
<text x="1103.4" y="700.9" fill="#48f048" font-size="13.4" stroke-width="0.00" textLength="10.2" lengthAdjust="spacingAndGlyphs">标</text>
<text x="1127.3" y="700.9" fill="#48f048" font-size="13.4" stroke-width="0.00" textLength="10.1" lengthAdjust="spacingAndGlyphs">记</text>
<text x="1176.2" y="700.9" fill="#48f048" font-size="13.4" stroke-width="0.00" textLength="10.2" lengthAdjust="spacingAndGlyphs">重</text>
<text x="1199.0" y="700.9" fill="#48f048" font-size="13.4" stroke-width="0.00" textLength="10.2" lengthAdjust="spacingAndGlyphs">量</text>
<text x="1238.6" y="700.9" fill="#48f048" font-size="13.4" stroke-width="0.00" textLength="10.1" lengthAdjust="spacingAndGlyphs">比</text>
<text x="1262.4" y="700.9" fill="#48f048" font-size="13.4" stroke-width="0.00" textLength="10.0" lengthAdjust="spacingAndGlyphs">例</text>
<text x="1062.6" y="760.0" fill="#48f048" font-size="13.1" stroke-width="0.00" textLength="10.4" lengthAdjust="spacingAndGlyphs">共</text>
<text x="1122.1" y="760.0" fill="#48f048" font-size="13.1" stroke-width="0.00" textLength="10.3" lengthAdjust="spacingAndGlyphs">张</text>
<text x="1189.6" y="760.0" fill="#48f048" font-size="13.1" stroke-width="0.00" textLength="10.2" lengthAdjust="spacingAndGlyphs">第</text>
<text x="1248.6" y="760.0" fill="#48f048" font-size="13.1" stroke-width="0.00" textLength="10.5" lengthAdjust="spacingAndGlyphs">张</text>
<text x="1289.3" y="620.3" fill="#48f048" font-size="27.7" stroke-width="0.75" textLength="251.4" lengthAdjust="spacingAndGlyphs">北京数码大方科技股份有限公司</text>
<text x="1372.8" y="683.5" fill="#48f048" font-size="28.2" stroke-width="0.75" textLength="83.8" lengthAdjust="spacingAndGlyphs">实体测试</text>
<text x="1150.00" y="639.6" fill="#48f048" font-size="29.43" stroke-width="0.75" textLength="20.97" lengthAdjust="spacingAndGlyphs">A4</text>
<text x="1176.60" y="730.0" fill="#48f048" font-size="14.71" stroke-width="0.00" textLength="32.39" lengthAdjust="spacingAndGlyphs">300.50</text>
<text x="1248.00" y="730.0" fill="#48f048" font-size="14.71" stroke-width="0.00" textLength="16.00" lengthAdjust="spacingAndGlyphs">1:1</text>
<text x="1327.80" y="746.2" fill="#48f048" font-size="30.71" stroke-width="0.75" textLength="173.65" lengthAdjust="spacingAndGlyphs">20250711.001.001</text></g>
<rect x="763" y="378" width="68" height="167" rx="3" fill="none" stroke="#ef4040" stroke-width="4"/>
</svg>
</div>
</body>
</html>
